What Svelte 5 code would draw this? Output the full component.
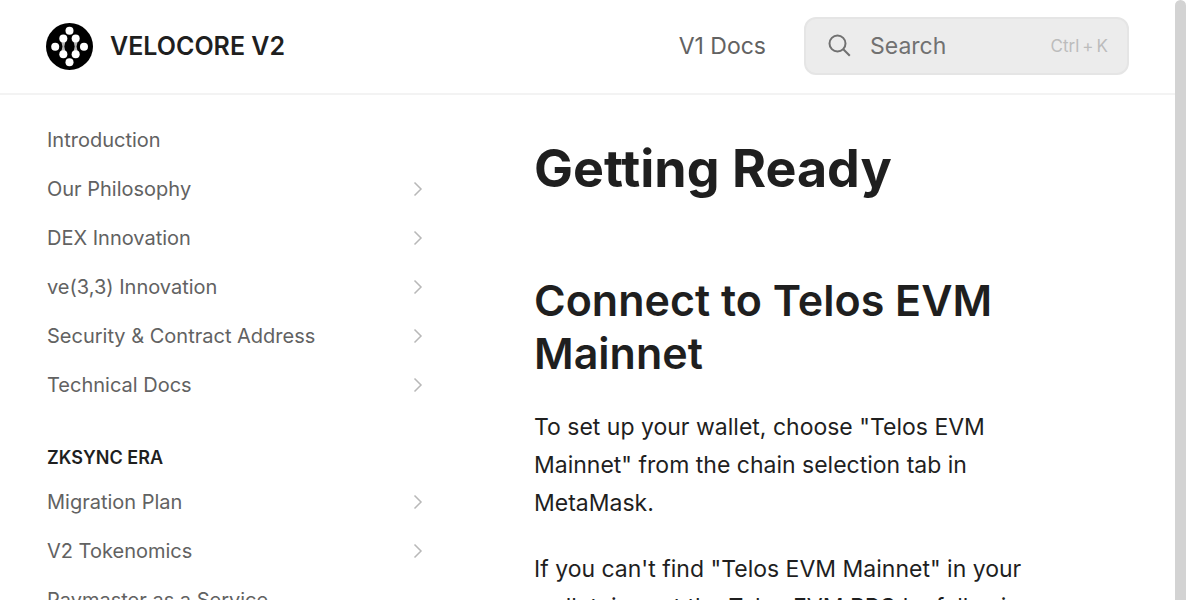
<script>
  const groups = [
    {
      title: '',
      items: [
        { label: 'Introduction', nested: false },
        { label: 'Our Philosophy', nested: true },
        { label: 'DEX Innovation', nested: true },
        { label: 've(3,3) Innovation', nested: true },
        { label: 'Security & Contract Address', nested: true },
        { label: 'Technical Docs', nested: true }
      ]
    },
    {
      title: 'zkSync Era',
      items: [
        { label: 'Migration Plan', nested: true },
        { label: 'V2 Tokenomics', nested: true },
        { label: 'Paymaster as a Service', nested: false }
      ]
    }
  ];
</script>

<div class="page">
  <header>
    <a class="brand" href="#home">
      <svg class="logo" viewBox="0 0 48 48" aria-hidden="true">
        <circle cx="24" cy="24" r="24" fill="#000" />
        <path d="M15.500 18h4.500l-1.300 6 1.300 6h-4.500l1.300-6zM28 18h4.500l-1.300 6 1.300 6h-4.500l1.300-6z" fill="#fff" opacity="0.7" />
        <g fill="#fff">
          <circle cx="24" cy="8" r="4.100" />
          <circle cx="24" cy="40" r="4.100" />
          <circle cx="9.400" cy="24.200" r="4.100" />
          <circle cx="38.800" cy="24.200" r="4.100" />
          <circle cx="17.700" cy="15.800" r="4.100" />
          <circle cx="30.300" cy="15.800" r="4.100" />
          <circle cx="17.700" cy="32" r="4.100" />
          <circle cx="30.300" cy="32" r="4.100" />
        </g>
      </svg>
      <span>VELOCORE V2</span>
    </a>
    <a class="link" href="#v1">V1 Docs</a>
    <button class="search" type="button">
      <svg viewBox="0 0 24 24" aria-hidden="true">
        <circle cx="9.500" cy="9.500" r="8" />
        <path d="M15.300 15.300l6.500 6.500" />
      </svg>
      <span>Search</span>
      <kbd><span>Ctrl</span><span>+</span><span>K</span></kbd>
    </button>
  </header>

  <div class="body">
    <nav aria-label="Contents">
      {#each groups as group}
        <section>
          {#if group.title}<h2>{group.title}</h2>{/if}
          <ul>
            {#each group.items as item}
              <li>
                <a href="#page">
                  <span>{item.label}</span>
                  {#if item.nested}
                    <svg viewBox="0 0 10 16" aria-hidden="true"><path d="M1.500 1.500L8 8l-6.500 6.500" /></svg>
                  {/if}
                </a>
              </li>
            {/each}
          </ul>
        </section>
      {/each}
    </nav>

    <main>
      <h1>Getting Ready</h1>
      <h2>Connect to Telos EVM Mainnet</h2>
      <p>To set up your wallet, choose "Telos EVM Mainnet" from the chain selection tab in MetaMask.</p>
      <p>If you can't find "Telos EVM Mainnet" in your wallet, import the Telos EVM RPC by following</p>
    </main>
  </div>
  <div class="scrollbar" aria-hidden="true"></div>
</div>

<style>
  :global(body) {
    background: #fff;
  }
  .page {
    box-sizing: border-box;
    height: 100vh;
    overflow: hidden;
    padding-right: 11px;
    display: flex;
    flex-direction: column;
    font-family: Inter, sans-serif;
    color: #1f1f1f;
  }
  a {
    color: inherit;
    text-decoration: none;
  }
  header {
    display: flex;
    align-items: center;
    flex: none;
    padding: 17px 46px 18px;
    border-bottom: 2px solid #f3f3f3;
  }
  .brand {
    display: flex;
    align-items: center;
    gap: 17px;
    margin-right: auto;
    font-size: 25px;
    font-weight: 600;
    line-height: 32px;
  }
  .logo {
    width: 47px;
    height: 47px;
  }
  .link {
    margin-right: 38px;
    font-size: 23px;
    color: #626262;
  }
  .search {
    box-sizing: border-box;
    display: flex;
    align-items: center;
    width: 325px;
    height: 58px;
    padding: 0 19px 0 22px;
    border: 2px solid #e5e5e5;
    border-radius: 12px;
    background: #ececec;
    font-family: inherit;
    font-size: 23px;
    color: #717171;
  }
  .search svg {
    width: 24px;
    height: 24px;
    margin-right: 18px;
    fill: none;
    stroke: #717171;
    stroke-width: 2;
  }
  kbd {
    display: flex;
    gap: 3px;
    margin-left: auto;
    font-family: inherit;
    font-size: 17px;
    color: #bcbcbc;
  }
  .body {
    display: flex;
    flex: 1;
    min-height: 0;
    overflow: hidden;
  }
  nav {
    box-sizing: border-box;
    flex: none;
    width: 426px;
    padding: 20px 0 0 47px;
  }
  ul {
    margin: 0;
    padding: 0;
    list-style: none;
  }
  section + section {
    margin-top: 34px;
  }
  nav h2 {
    margin: 0 0 4px;
    font-size: 18px;
    line-height: 30px;
    font-weight: 600;
    text-transform: uppercase;
  }
  li a {
    display: flex;
    align-items: center;
    justify-content: space-between;
    height: 49px;
    font-size: 20px;
    color: #626262;
  }
  li svg {
    width: 10px;
    height: 16px;
    margin-right: 3px;
    fill: none;
    stroke: #b8b8b8;
    stroke-width: 1.500;
  }
  main {
    flex: 1;
    min-width: 0;
    padding: 41px 128px 0 108px;
  }
  h1 {
    margin: 0 0 72px;
    font-size: 52px;
    line-height: 66px;
    font-weight: 700;
  }
  main h2 {
    margin: 0 0 28px;
    font-size: 43px;
    line-height: 53px;
    font-weight: 600;
  }
  p {
    margin: 0 0 28px;
    font-size: 23px;
    line-height: 38px;
  }
  .scrollbar {
    position: fixed;
    top: 0;
    right: 0;
    bottom: 0;
    width: 11px;
    border-radius: 6px 6px 0 0;
    background: #d3d3d3;
  }
</style>
